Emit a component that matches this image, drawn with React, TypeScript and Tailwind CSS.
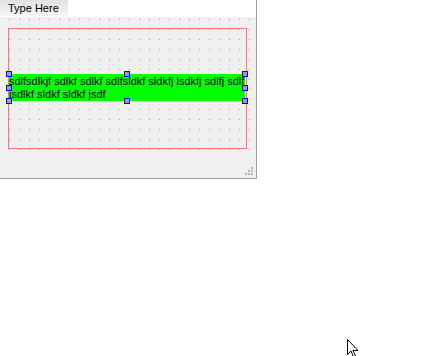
const HANDLES = [
  "-left-[3px] -top-[3px]",
  "left-[115px] -top-[3px]",
  "-right-[3px] -top-[3px]",
  "-left-[3px] top-[11px]",
  "-right-[3px] top-[11px]",
  "-left-[3px] -bottom-[3px]",
  "left-[115px] -bottom-[3px]",
  "-right-[3px] -bottom-[3px]",
];

function SizeGrip() {
  // little stair of 2px squares, like a Windows status-bar grip
  const dots = [
    [0, 0, 1],
    [0, 1, 1],
    [1, 1, 1],
  ];
  return (
    <div className="flex flex-col gap-px">
      {dots.map((row, r) => (
        <div key={r} className="flex gap-px">
          {row.map((on, c) => (
            <span key={c} className={on ? "h-[2px] w-[2px] bg-[#b4b4b4]" : "h-[2px] w-[2px]"} />
          ))}
        </div>
      ))}
    </div>
  );
}

function Cursor() {
  return (
    <svg width="12" height="19" viewBox="0 0 12 19" className="absolute left-[347px] top-[339px]" aria-hidden="true">
      <path
        d="M0.5 0.5v15l3.5-3.5 2.5 6 2-1-2.5-5.5h5z"
        fill="#fff"
        stroke="#000"
        strokeWidth="1"
        strokeLinejoin="miter"
      />
    </svg>
  );
}

export default function App() {
  return (
    <div className="relative h-[356px] w-[443px] overflow-hidden bg-white font-['Liberation_Sans',Arial,sans-serif] text-black">
      {/* designer window */}
      <div className="flex h-[179px] w-[257px] flex-col border-b border-r border-[#a0a0a0]">
        {/* menu bar */}
        <div className="flex h-[17px] bg-white">
          <div className="flex h-[16px] w-[68px] items-center bg-gradient-to-b from-[#e2e2e2] to-[#f6f6f6] pl-[8px] text-[11px] leading-none">
            Type Here
          </div>
        </div>

        {/* form canvas */}
        <div className="flex flex-1 flex-col bg-[#f0f0f0]">
          <div className="h-[134px] bg-[linear-gradient(to_right,#f0f0f0_9px,transparent_9px),linear-gradient(to_bottom,#f0f0f0_9px,#a0a0a0_9px)] bg-[length:10px_10px] bg-[position:0_3px] pl-[8px] pt-[11px]">
            {/* layout box */}
            <div className="h-[121px] w-[239px] border border-[#ff7272] pt-[45px]">
              <div className="relative h-[27px] w-[236px] bg-[#00ff00] pt-px text-[11px] leading-[13px]">
                sdlfsdlkjf sdlkf sdlkf sdlfsldkf sldkfj lsdkfj sdlfj sdlf
                <br />
                jsdlkf sldkf sldkf jsdf
                {HANDLES.map((pos) => (
                  <span
                    key={pos}
                    className={`absolute h-[6px] w-[6px] border border-[#0000ff] bg-[#a0a0a0] ${pos}`}
                  />
                ))}
              </div>
            </div>
          </div>
          <div className="flex flex-1 items-end justify-end pb-[3px] pr-[3px]">
            <SizeGrip />
          </div>
        </div>
      </div>

      <Cursor />
    </div>
  );
}
